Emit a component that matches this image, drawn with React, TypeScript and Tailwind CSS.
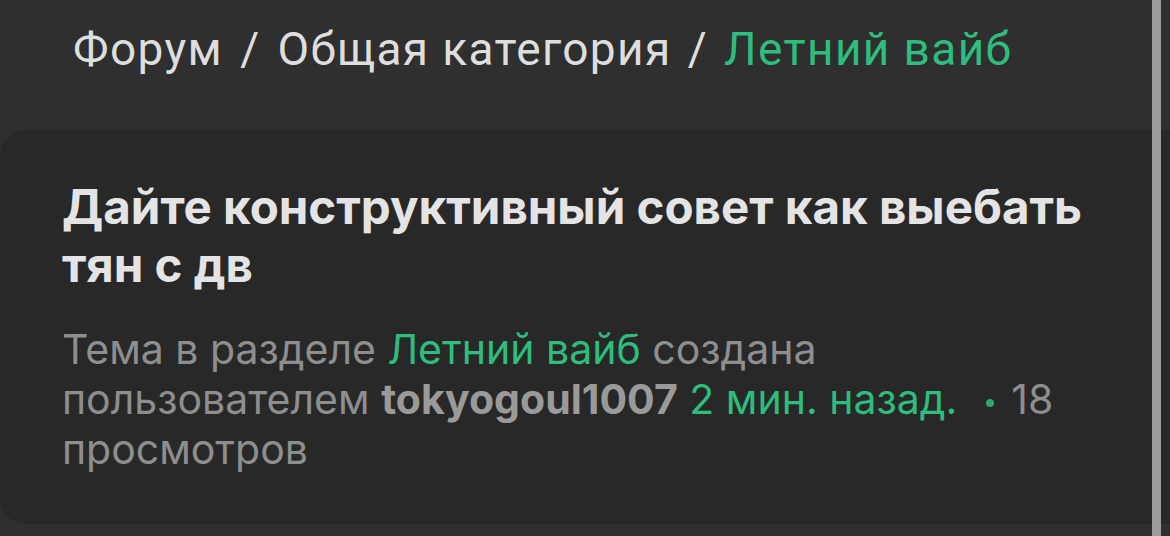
export default function App() {
  return (
    <div className="relative h-screen w-full overflow-hidden bg-[#2f2f2f]">
      {/* Breadcrumbs */}
      <nav className="flex items-center whitespace-nowrap pl-[73px] pt-[19px] font-['Roboto',sans-serif] text-[46px] leading-[60px] tracking-[0.03em] text-[#dedede]">
        <span>Форум</span>
        <span className="mx-[17px]">/</span>
        <span>Общая категория</span>
        <span className="mx-[16px]">/</span>
        <span className="text-[#2dbd7e]">Летний вайб</span>
      </nav>

      {/* Thread header card */}
      <div className="mt-[51px] rounded-l-[26px] bg-[#282828] pb-[50px] pl-[62px] pt-[48px] font-['Inter',sans-serif]">
        <div className="w-[1040px]">
          <h1 className="text-[47.5px] font-bold leading-[58px] text-[#e4e4e4]">
            Дайте конструктивный совет как выебать тян с дв
          </h1>
          <p className="mt-[30px] text-[41px] leading-[50px] text-[#8e8e8e]">
            Тема в разделе <span className="text-[#2dbd7e]">Летний вайб</span> создана пользователем{' '}
            <span className="font-bold text-[#9a9a9a]">tokyogoul1007</span>{' '}
            <span className="text-[#2dbd7e]">2 мин. назад.</span>
            <span className="ml-[29px] mr-[17px] inline-block h-[8px] w-[8px] rounded-full bg-[#2aa96c] align-middle" />
            18 просмотров
          </p>
        </div>
      </div>

      {/* Scrollbar */}
      <div className="absolute inset-y-0 right-[9px] z-10 w-[9px] bg-[#9b9b9b]" />
    </div>
  )
}
